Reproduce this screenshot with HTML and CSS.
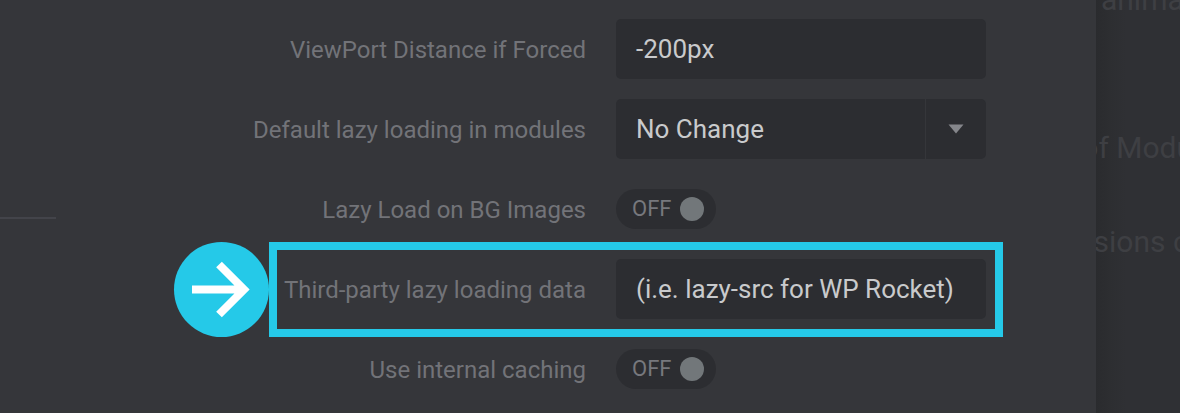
FILE: index.html
```html
<!DOCTYPE html>
<html lang="en">
<head>
<meta charset="utf-8">
<title>Lazy loading settings</title>
<link rel="stylesheet" href="styles.css">
</head>
<body>
<div class="page">
  <main class="panel">
    <div class="side"><div class="side-line"></div></div>
    <div class="form">
      <div class="label">ViewPort Distance if Forced</div>
      <div class="field"><span class="value">-200px</span></div>
      <div class="label">Default lazy loading in modules</div>
      <div class="field select">
        <span class="value">No Change</span>
        <span class="caret"><svg width="16" height="10" viewBox="0 0 16 10"><path d="M0.5 0.5H15.5L8 9.500Z" fill="#85868b"/></svg></span>
      </div>
      <div class="label">Lazy Load on BG Images</div>
      <div class="cell"><div class="toggle"><span class="toggle-text">OFF</span><i class="knob"></i></div></div>
      <div class="label">Third-party lazy loading data</div>
      <div class="field"><span class="value">(i.e. lazy-src for WP Rocket)</span></div>
      <div class="label">Use internal caching</div>
      <div class="cell"><div class="toggle"><span class="toggle-text">OFF</span><i class="knob"></i></div></div>
    </div>
  </main>
  <aside class="behind">
    <div class="ghost ghost-a">Set animations</div>
    <div class="ghost ghost-b">Use of Modules</div>
    <div class="ghost ghost-c">Versions cached</div>
  </aside>
  <div class="highlight"></div>
  <div class="pointer">
    <svg width="95" height="95" viewBox="0 0 95 95"><path d="M18 47.500H70M45 22.500L70 47.500L45 72.500" fill="none" stroke="#fff" stroke-width="8"/></svg>
  </div>
</div>
</body>
</html>
```
FILE: styles.css
```css
* { box-sizing: border-box; }
html, body { margin: 0; height: 100%; }
body { background: #35363a; font-family: Roboto, "Liberation Sans", sans-serif; overflow: hidden; }
.page { position: relative; display: flex; width: 1180px; height: 413px; overflow: hidden; }
.panel { display: flex; width: 1096px; flex: none; background: #35363a; }
.side { width: 56px; flex: none; padding-top: 217px; }
.side-line { height: 2px; background: #43444a; }
.form { display: grid; grid-template-columns: 530px 370px; column-gap: 30px; row-gap: 20px; grid-auto-rows: 60px; padding-top: 19px; align-items: center; }
.label { text-align: right; font-size: 24px; color: #727378; white-space: nowrap; padding-top: 1px; }
.field { height: 60px; display: flex; align-items: center; background: #2c2d31; border-radius: 5px; font-size: 26px; color: #c9cacc; }
.value { padding-left: 20px; white-space: nowrap; }
.select .value { flex: 1; }
.caret { width: 61px; height: 60px; display: flex; align-items: center; justify-content: center; border-left: 1px solid #35363a; }
.cell { display: flex; align-items: center; }
.toggle { width: 100px; height: 40px; display: flex; align-items: center; padding-left: 16px; gap: 9px; background: #2c2d31; border-radius: 20px; font-size: 22px; color: #77787d; }
.toggle-text { padding-bottom: 2px; }
.knob { width: 24px; height: 24px; border-radius: 50%; background: #72777a; }
.behind { flex: 1; overflow: hidden; background: linear-gradient(90deg, #2a2b2e 0, #2d2e31 14px, #2f3034 30px); color: #3e3f43; font-size: 30px; white-space: nowrap; position: relative; }
.ghost { position: absolute; line-height: 36px; }
.ghost-a { left: -46px; top: -18px; }
.ghost-b { left: -73px; top: 130px; }
.ghost-c { left: -47px; top: 224px; }
.highlight { position: absolute; left: 269px; top: 242px; width: 734px; height: 95px; border: 8px solid #25c9e8; }
.pointer { position: absolute; left: 174px; top: 242px; width: 95px; height: 95px; border-radius: 50%; background: #25c9e8; }
.pointer svg { display: block; }
```
